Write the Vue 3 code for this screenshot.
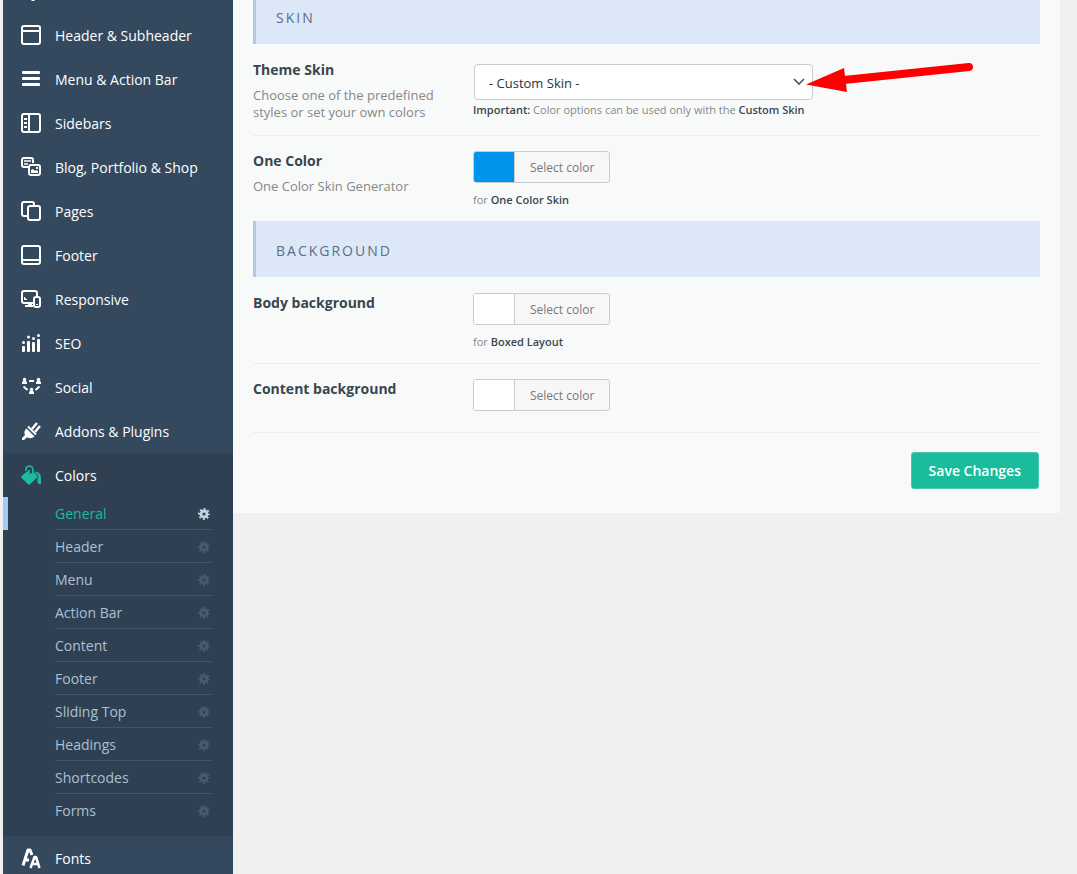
<script setup>
import { ref } from 'vue'

const items = [
  { icon: 'header', label: 'Header & Subheader' },
  { icon: 'menu', label: 'Menu & Action Bar' },
  { icon: 'sidebars', label: 'Sidebars' },
  { icon: 'blog', label: 'Blog, Portfolio & Shop' },
  { icon: 'pages', label: 'Pages' },
  { icon: 'footer', label: 'Footer' },
  { icon: 'responsive', label: 'Responsive' },
  { icon: 'seo', label: 'SEO' },
  { icon: 'social', label: 'Social' },
  { icon: 'plugins', label: 'Addons & Plugins' },
  { icon: 'colors', label: 'Colors', open: true },
  { icon: 'fonts', label: 'Fonts' }
]

const subItems = ['General', 'Header', 'Menu', 'Action Bar', 'Content', 'Footer', 'Sliding Top', 'Headings', 'Shortcodes', 'Forms']

// Markup of each 20x20 menu icon
const icons = {
  header: '<g fill="none" stroke="currentColor" stroke-width="2"><rect x="1" y="1" width="18" height="18" rx="2"/><path d="M1 6h18"/></g>',
  menu: '<g fill="currentColor"><rect x="1" y="2" width="18" height="3" rx="1"/><rect x="1" y="8" width="18" height="3" rx="1"/><rect x="1" y="14" width="18" height="3" rx="1"/></g>',
  sidebars: '<g fill="none" stroke="currentColor" stroke-width="2"><rect x="1" y="1" width="18" height="18" rx="2"/><path d="M8 1v18M3 6h3M3 10h3M3 14h3"/></g>',
  blog: '<g fill="none" stroke="currentColor" stroke-width="2"><path d="M7 10H3a2 2 0 0 1-2-2V3a2 2 0 0 1 2-2h7a2 2 0 0 1 2 2v3"/><path d="M3 4h7M3 7h4" stroke-width="1.5"/><rect x="8" y="8" width="11" height="10" rx="2"/></g><path d="M10 16v-3l2-1 2 2 1-1 2 1v2zM15 10h2v2h-2z" fill="currentColor"/>',
  pages: '<g fill="none" stroke="currentColor" stroke-width="2"><path d="M6 15H3a2 2 0 0 1-2-2V3a2 2 0 0 1 2-2h8a2 2 0 0 1 2 2v2"/><rect x="7" y="5" width="12" height="14" rx="2"/></g>',
  footer: '<g fill="none" stroke="currentColor" stroke-width="2"><rect x="1" y="1" width="18" height="18" rx="2"/><path d="M1 15h18"/></g>',
  responsive: '<g fill="none" stroke="currentColor" stroke-width="2"><path d="M12 14H3a2 2 0 0 1-2-2V4a2 2 0 0 1 2-2h11a2 2 0 0 1 2 2v3"/><path d="M4 17h8"/><path d="M9 14v3" stroke-width="4"/><rect x="13" y="8" width="6" height="10" rx="2"/></g><path d="M3 8h1v1h1v1h1v1H3zM15 15h2v1h-2z" fill="currentColor"/>',
  seo: '<g fill="currentColor"><rect x="1" y="13" width="3" height="6" rx="1"/><rect x="6" y="8" width="3" height="11" rx="1"/><rect x="11" y="9" width="3" height="10" rx="1"/><rect x="16" y="6" width="3" height="13" rx="1"/><circle cx="2.500" cy="9.500" r="1.500"/><circle cx="7.500" cy="4" r="1.500"/><circle cx="12.500" cy="5.500" r="1.500"/><circle cx="17.500" cy="2.500" r="1.500"/></g>',
  social: '<g fill="currentColor"><circle cx="3.500" cy="2.500" r="1.700"/><path d="M1 7V6q0-2.500 2.500-2.500T6 6v1z"/><circle cx="17.500" cy="2.500" r="1.700"/><path d="M15 7V6q0-2.500 2.500-2.500T20 6v1z"/><circle cx="10.500" cy="12.500" r="1.700"/><path d="M8 17v-1q0-2.500 2.500-2.500T13 16v1z"/></g><path d="M8 4h5M2.500 9.500l4 3.500M18.500 9.500l-4 3.500" fill="none" stroke="currentColor" stroke-width="2"/>',
  plugins: '<path d="M7 5.500l8 8" stroke="currentColor" stroke-width="2"/><path d="M11 8l5-6M14 11l5-6" stroke="currentColor" stroke-width="2.500"/><path d="M5.500 7.500l8 8q-3.500 3-7.500.800L3 19H1v-2l3-3q-1.800-3.500 1.500-6.500z" fill="currentColor"/>',
  colors: '<path d="M8.500 4.500L.600 11q-.800 1 0 2L7 19.300q1 .900 2 0l7.300-7q.700-1 0-1.800L11.500 5.500z" fill="currentColor"/><path d="M10.800 3.500v6" stroke="#2f4052" stroke-width="4"/><path d="M5 6Q4.500 1 8.500 1 12 1.200 12 6v3.500" fill="none" stroke="currentColor" stroke-width="1.700"/><circle cx="11" cy="9.500" r="1.700" fill="currentColor"/><path d="M14.500 6.500q6 1 5.500 7.500v5h-2.500q-2-2.500-.500-6 1.500-3-2.500-5z" fill="currentColor"/>',
  fonts: '<g fill="none" stroke="currentColor" stroke-linejoin="round"><path d="M2 17.500L7 2h2l2 5M4.500 12H8" stroke-width="3"/><path d="M9.500 20L13.500 9h1.500l3.500 11M11 16h7" stroke-width="2.500"/></g>'
}

const skin = ref('custom')
</script>

<template>
  <div class="page">
    <nav class="sidebar" aria-label="Theme options">
      <div class="peek" aria-hidden="true">
        <svg width="4" height="2" viewBox="0 0 4 2"><path d="M0 0h4L3 1H1z" fill="#fff" /></svg>
      </div>
      <div v-for="item in items" :key="item.label" :class="['group', { open: item.open }]">
        <a href="#" class="item">
          <svg width="20" height="20" viewBox="0 0 20 20" aria-hidden="true" v-html="icons[item.icon]"></svg>
          <span>{{ item.label }}</span>
        </a>
        <ul v-if="item.open" class="sub">
          <li v-for="(sub, i) in subItems" :key="sub" :class="{ active: i === 0 }">
            <a href="#">
              <span>{{ sub }}</span>
              <svg width="12" height="12" viewBox="0 0 12 12" aria-hidden="true">
                <g fill="none" stroke="currentColor">
                  <circle cx="6" cy="6" r="3" stroke-width="2.800" />
                  <circle cx="6" cy="6" r="5" stroke-width="2" stroke-dasharray="2 1.927" stroke-dashoffset="1" />
                </g>
              </svg>
            </a>
          </li>
        </ul>
      </div>
    </nav>

    <main class="panel">
      <h2 class="section first">SKIN</h2>

      <div class="row theme">
        <div class="info">
          <label class="title" for="skin">Theme Skin</label>
          <p class="desc">Choose one of the predefined styles or set your own colors</p>
        </div>
        <div class="field">
          <div class="select-wrap">
            <select id="skin" v-model="skin">
              <option value="custom">- Custom Skin -</option>
              <option value="one">- One Color Skin -</option>
            </select>
            <svg class="chevron" width="12" height="8" viewBox="0 0 12 8" aria-hidden="true">
              <path d="M1 1l5 5 5-5" fill="none" stroke="#55595e" stroke-width="1.700" />
            </svg>
            <svg class="arrow" width="180" height="40" viewBox="0 0 180 40" aria-hidden="true">
              <path d="M6 24.500L44 8l3 24z" fill="#f00" />
              <path d="M44 20L169 7" stroke="#f00" stroke-width="8" stroke-linecap="round" />
            </svg>
          </div>
          <p class="note"><b>Important:</b> Color options can be used only with the <b>Custom Skin</b></p>
        </div>
      </div>

      <div class="row last">
        <div class="info">
          <h3 class="title">One Color</h3>
          <p class="desc">One Color Skin Generator</p>
        </div>
        <div class="field">
          <button type="button" class="picker" aria-label="Select color: One Color"><i class="swatch blue"></i><span>Select color</span></button>
          <p class="hint">for <b>One Color Skin</b></p>
        </div>
      </div>

      <h2 class="section">BACKGROUND</h2>

      <div class="row">
        <div class="info"><h3 class="title">Body background</h3></div>
        <div class="field">
          <button type="button" class="picker" aria-label="Select color: Body background"><i class="swatch"></i><span>Select color</span></button>
          <p class="hint">for <b>Boxed Layout</b></p>
        </div>
      </div>

      <div class="row">
        <div class="info"><h3 class="title">Content background</h3></div>
        <div class="field">
          <button type="button" class="picker" aria-label="Select color: Content background"><i class="swatch"></i><span>Select color</span></button>
        </div>
      </div>

      <div class="actions"><button type="button" class="save">Save Changes</button></div>
    </main>
  </div>
</template>

<style>
body {
  background: #f0f0f0;
}
</style>

<style scoped>
* {
  box-sizing: border-box;
}
.page {
  display: flex;
  align-items: flex-start;
  height: 100vh;
  overflow: hidden;
  padding: 0 17px 0 3px;
  font-family: "Open Sans", "Noto Sans", sans-serif;
  font-size: 14px;
}
p, h2, h3, ul {
  margin: 0;
  padding: 0;
}
.sidebar {
  flex: 0 0 230px;
  background: #34495e;
}
.peek {
  display: flex;
  height: 13px;
  padding-left: 28px;
}
.item {
  display: flex;
  align-items: center;
  gap: 14px;
  height: 44px;
  padding: 0 18px;
  color: #fff;
  text-decoration: none;
}
.item svg {
  flex: none;
  overflow: visible;
}
.item span {
  padding-top: 1px;
}
.open {
  background: #2f4052;
  padding-bottom: 9px;
}
.open svg {
  color: #1abc9c;
}
.sub {
  list-style: none;
}
.sub li {
  height: 33px;
  padding: 0 20px 0 52px;
}
.sub a {
  display: flex;
  align-items: center;
  justify-content: space-between;
  height: 33px;
  padding-right: 3px;
  border-bottom: 1px solid #435467;
  color: #abc0d4;
  text-decoration: none;
}
.sub li:last-child a {
  border-bottom-color: transparent;
}
.sub svg {
  margin-top: 2px;
  color: #435b74;
}
.sub .active {
  padding-left: 47px;
  border-left: 5px solid #a4caf2;
}
.sub .active a {
  color: #1abc9c;
}
.sub .active svg {
  color: #c5d2e0;
}
.panel {
  flex: 1;
  min-width: 0;
  padding: 0 20px 24px;
  background: #f8faf9;
}
.section {
  height: 56px;
  margin-bottom: 1px;
  padding: 4px 20px 0;
  border-left: 3px solid #b3c7e6;
  background: #dce7f8;
  color: #5a6f86;
  font-size: 14px;
  font-weight: 400;
  line-height: 52px;
  letter-spacing: 2px;
}
.first {
  margin-top: -12px;
}
.row {
  display: flex;
  min-height: 69px;
  padding: 15px 0 13px;
  border-bottom: 1px solid #ebeeed;
}
.row.theme {
  padding-bottom: 14px;
}
.row.last {
  border-bottom: 0;
}
.info {
  flex: 0 0 220px;
  padding-right: 20px;
}
.title {
  display: block;
  color: #3a464f;
  font-size: 14px;
  font-weight: 700;
  line-height: 20px;
}
.desc {
  margin-top: 7px;
  color: #85888a;
  font-size: 13px;
  line-height: 17px;
}
.field {
  flex: 1;
  min-width: 0;
}
.select-wrap {
  position: relative;
  width: 340px;
  margin-top: 4px;
  padding-left: 1px;
}
select {
  display: block;
  width: 100%;
  height: 36px;
  padding: 2px 30px 0 14px;
  appearance: none;
  border: 1px solid #c8cccc;
  border-radius: 4px;
  background: #fff;
  color: #2c3338;
  font: 13px "Open Sans", "Noto Sans", sans-serif;
}
.chevron {
  position: absolute;
  top: 14px;
  right: 8px;
}
.arrow {
  position: absolute;
  top: -4px;
  left: 327px;
}
.note, .hint {
  color: #85888a;
  font-size: 11px;
  line-height: 16px;
}
.note {
  margin-top: 2px;
}
.hint {
  margin-top: 9px;
}
b {
  color: #3a464f;
  font-weight: 600;
}
.picker {
  display: flex;
  height: 32px;
  padding: 0;
  border: 1px solid #c8cccc;
  border-radius: 3px;
  background: #f7f7f7;
  overflow: hidden;
  color: #777;
  font: 12px "Open Sans", "Noto Sans", sans-serif;
}
.picker span {
  padding: 0 15px;
  line-height: 32px;
}
.swatch {
  width: 41px;
  height: 30px;
  border-right: 1px solid #c8cccc;
  background: #fff;
}
.blue {
  background: #0095eb;
}
.actions {
  display: flex;
  justify-content: flex-end;
  padding: 19px 1px 0 0;
}
.save {
  height: 37px;
  padding: 0 17px;
  border: 1px solid #4dc7ae;
  border-radius: 3px;
  background: #1abc9c;
  color: #fff;
  font: 600 14px "Open Sans", "Noto Sans", sans-serif;
}
</style>
